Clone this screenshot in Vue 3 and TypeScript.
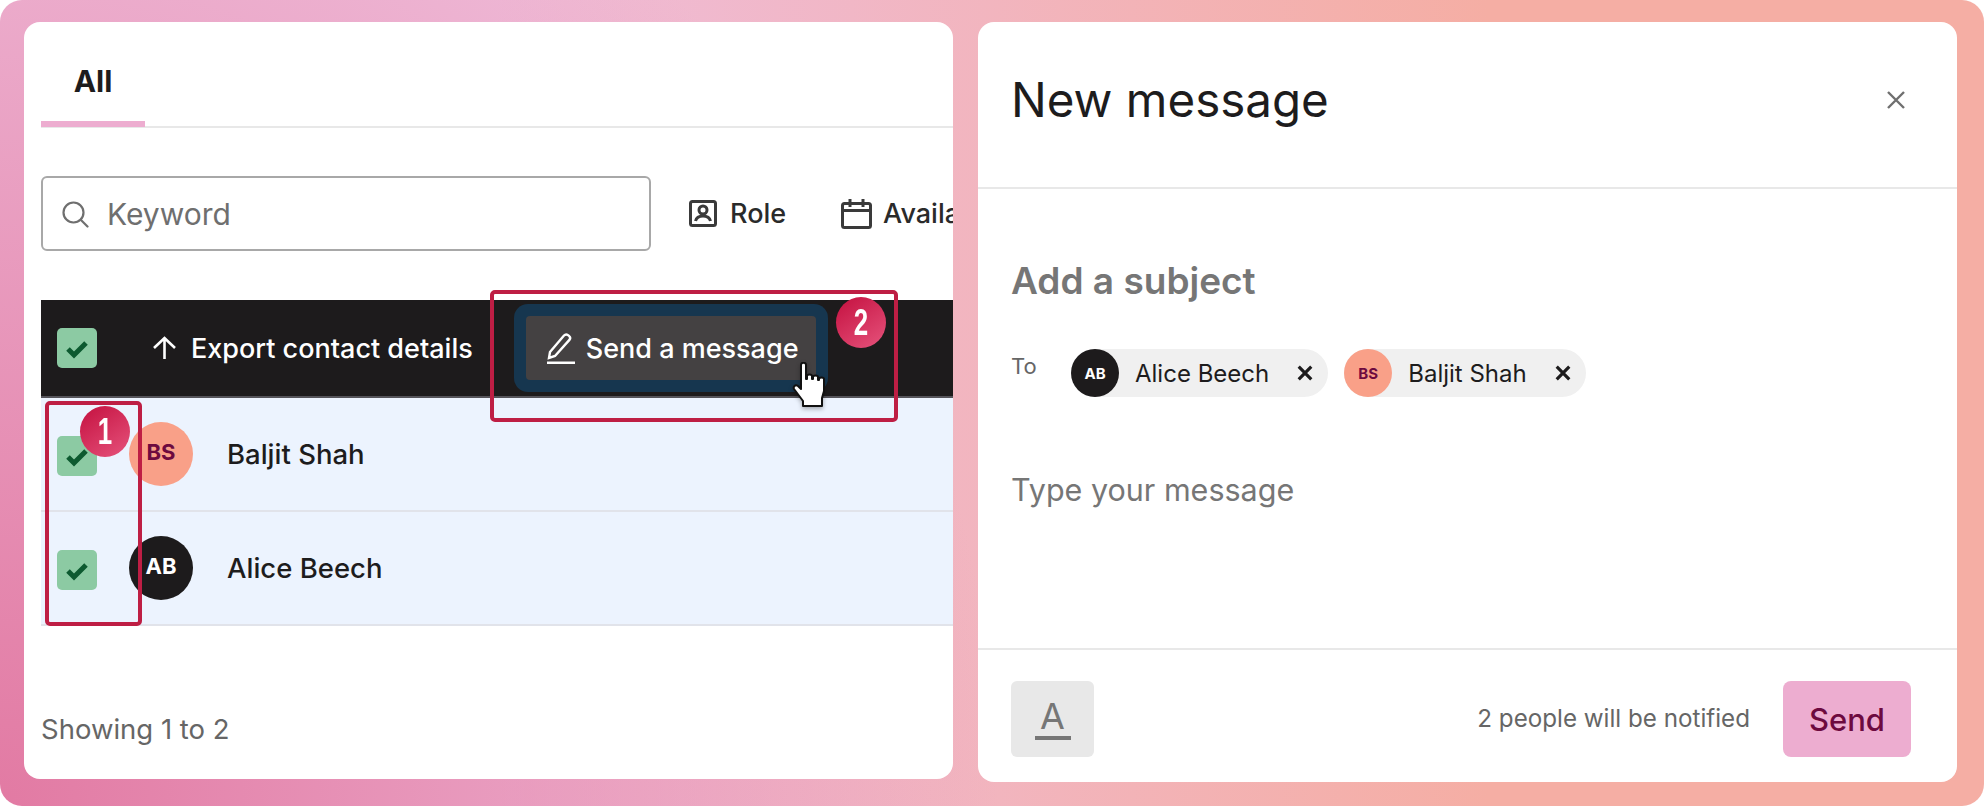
<script setup lang="ts">
interface Person { name: string; initials: string; tone: string }
const rows: Person[] = [
  { name: 'Baljit Shah', initials: 'BS', tone: 'peach' },
  { name: 'Alice Beech', initials: 'AB', tone: 'dark' },
]
const chips: Person[] = [rows[1], rows[0]]
</script>

<template>
  <div class="page">
    <section class="card left">
      <div class="tabs"><div class="tab">All</div></div>

      <div class="filters">
        <div class="search">
          <svg class="search-icon" viewBox="0 0 28 28" fill="none" stroke="#6f6f6f" stroke-width="2.2">
            <circle cx="12.5" cy="12.5" r="10" />
            <path d="M20 20l6.5 6.5" stroke-linecap="round" />
          </svg>
          <span>Keyword</span>
        </div>
        <div class="filter role">
          <svg viewBox="0 0 28 28" fill="none" stroke="#3a3a3a" stroke-width="3">
            <rect x="1.5" y="1.5" width="25" height="24" rx="2" />
            <circle cx="14" cy="10" r="4" />
            <path d="M6.5 21c1-4 4-5 7.500-5s6.500 1 7.500 5" />
          </svg>
          <span>Role</span>
        </div>
        <div class="filter avail">
          <svg viewBox="0 0 31 30" fill="none" stroke="#3a3a3a" stroke-width="3">
            <rect x="1.500" y="4.500" width="28" height="24" rx="2" />
            <path d="M1.500 11.500h28M9 0v8M22 0v8" />
          </svg>
          <span>Availability</span>
        </div>
      </div>

      <div class="bulk">
        <span class="check"><svg viewBox="0 0 40 40"><path d="M11 21l6 6 12-12" /></svg></span>
        <div class="export">
          <svg viewBox="0 0 25 24" fill="none" stroke="#fff" stroke-width="2.600">
            <path d="M12.500 23V2M2 12L12.500 2 23 12" />
          </svg>
          <span>Export contact details</span>
        </div>
        <div class="ring">
          <div class="send-msg">
            <svg viewBox="0 0 28 32" fill="none" stroke="#fff" stroke-width="2.400">
              <path d="M3 20L17 3.500c1.200-1.300 2.800-1.300 4-.4l1 .8c1.300 1 1.400 2.700.4 4L8 24l-6 2z" />
              <path d="M0 31h28" stroke-width="3" />
            </svg>
            <span>Send a message</span>
          </div>
        </div>
      </div>

      <div v-for="row in rows" :key="row.name" class="row">
        <span class="check row-check"><svg viewBox="0 0 40 40"><path d="M11 21l6 6 12-12" /></svg></span>
        <span class="avatar" :class="row.tone">{{ row.initials }}</span>
        <span class="name">{{ row.name }}</span>
      </div>

      <div class="showing">Showing 1 to 2</div>
    </section>

    <section class="card right">
      <header class="head">
        <h1>New message</h1>
        <svg class="close" viewBox="0 0 20 20" fill="none" stroke="#6f6f6f" stroke-width="2.400">
          <path d="M2 2l16 16M18 2L2 18" />
        </svg>
      </header>

      <div class="body">
        <div class="subject">Add a subject</div>
        <div class="to">
          <span class="to-label">To</span>
          <div v-for="chip in chips" :key="chip.name" class="chip">
            <span class="chip-avatar" :class="chip.tone">{{ chip.initials }}</span>
            <span class="chip-name">{{ chip.name }}</span>
            <svg viewBox="0 0 14 14" fill="none" stroke="#1d1c1d" stroke-width="2.800">
              <path d="M1.500 1.500l11 11M12.500 1.500l-11 11" />
            </svg>
          </div>
        </div>
        <div class="typed">Type your message</div>
      </div>

      <footer class="foot">
        <div class="format"><span>A</span><i></i></div>
        <span class="notified">2 people will be notified</span>
        <div class="send">Send</div>
      </footer>
    </section>

    <div class="mark mark-one"></div>
    <div class="mark mark-two"></div>
    <div class="badge badge-one"><span>1</span></div>
    <div class="badge badge-two"><span>2</span></div>

    <svg class="cursor" viewBox="0 0 36 52">
      <path
        d="M9 3c0-3 5-3 5 0v14h1v-3c0-2 5-2 5 0v3h1v-2c0-2 5-2 5 0v3h1v-1c0-2 5-2 5 0v12l-2 7v8H11v-5L2 27c-1-2 1-5 4-3l3 3z"
        fill="#fff" stroke="#111" stroke-width="2" stroke-linejoin="round"
      />
    </svg>
  </div>
</template>

<style>
html, body { margin: 0; background: #fff; }
</style>

<style scoped>
.page {
  position: relative;
  box-sizing: border-box;
  width: 1984px;
  height: 806px;
  display: flex;
  align-items: flex-start;
  gap: 25px;
  padding: 22px 0 0 24px;
  border-radius: 22px;
  overflow: hidden;
  background:
    radial-gradient(1000px 1100px at 0 100%, #e27aa3, rgba(226, 122, 163, 0)),
    linear-gradient(90deg, #efbcd9 25%, #f5aea4 75%);
  font-family: Inter, "Noto Sans", sans-serif;
  color: #1d1c1d;
}
.card {
  box-sizing: border-box;
  background: #fff;
  border-radius: 16px;
  overflow: hidden;
  flex: none;
}
.left {
  width: 929px;
  height: 757px;
  padding-left: 17px;
}
.tabs {
  box-sizing: border-box;
  height: 106px;
  border-bottom: 2px solid #e8e8e8;
  display: flex;
}
.tab {
  box-sizing: border-box;
  width: 104px;
  height: 105px;
  border-bottom: 6px solid #edadd0;
  text-align: center;
  font-size: 30px;
  font-weight: 700;
  line-height: 36px;
  padding-top: 41px;
}
.filters {
  display: flex;
  align-items: center;
  height: 75px;
  margin-top: 48px;
  white-space: nowrap;
}
.search {
  box-sizing: border-box;
  width: 610px;
  height: 75px;
  flex: none;
  display: flex;
  align-items: center;
  border: 2px solid #a8a8a8;
  border-radius: 6px;
  padding-left: 18px;
  color: #6f6f6f;
  font-size: 30px;
}
.search-icon { width: 28px; height: 28px; margin-right: 18px; }
.filter {
  display: flex;
  align-items: center;
  gap: 13px;
  font-size: 27px;
  font-weight: 500;
  color: #2a2a2a;
  flex: none;
}
.role { margin-left: 38px; }
.role svg { width: 28px; height: 28px; }
.avail { margin-left: 55px; gap: 11px; }
.avail svg { width: 31px; height: 30px; }
.bulk {
  box-sizing: border-box;
  height: 98px;
  margin-top: 49px;
  display: flex;
  align-items: center;
  padding-left: 16px;
  background: #1d1b1c;
  border-bottom: 2px solid #55545a;
}
.check {
  width: 40px;
  height: 40px;
  flex: none;
  border-radius: 5px;
  background: #8ccaa3;
}
.row-check { margin-top: 4px; }
.check svg { display: block; width: 40px; height: 40px; fill: none; stroke: #0d5a30; stroke-width: 5; }
.export {
  display: flex;
  align-items: center;
  gap: 14px;
  margin-left: 55px;
  color: #fff;
  font-size: 27px;
  font-weight: 500;
  white-space: nowrap;
}
.export svg { width: 25px; height: 24px; }
.ring {
  margin-left: 41px;
  padding: 12px;
  border-radius: 14px;
  background: #16364f;
}
.send-msg {
  box-sizing: border-box;
  width: 290px;
  height: 64px;
  display: flex;
  align-items: center;
  gap: 11px;
  padding-left: 21px;
  border-radius: 4px;
  background: #444142;
  color: #fff;
  font-size: 27px;
  font-weight: 500;
  white-space: nowrap;
}
.send-msg svg { width: 28px; height: 32px; }
.row {
  box-sizing: border-box;
  height: 114px;
  display: flex;
  align-items: center;
  padding-left: 16px;
  background: #ecf3fe;
  border-bottom: 2px solid #e1e3ea;
}
.avatar {
  width: 64px;
  height: 64px;
  margin-left: 32px;
  flex: none;
  border-radius: 50%;
  display: flex;
  align-items: center;
  justify-content: center;
  font-size: 22px;
  font-weight: 700;
  padding-bottom: 4px;
  box-sizing: border-box;
}
.peach { background: #f9a088; color: #6d0a3f; }
.dark { background: #1d1b1c; color: #fff; }
.name {
  margin-left: 35px;
  font-size: 27.500px;
  font-weight: 500;
  position: relative;
  left: -1px;
}
.showing {
  margin-top: 85px;
  color: #666;
  font-size: 27.500px;
  line-height: 36px;
}
.right {
  width: 979px;
  height: 760px;
  display: flex;
  flex-direction: column;
}
.head {
  box-sizing: border-box;
  height: 167px;
  flex: none;
  display: flex;
  align-items: center;
  justify-content: space-between;
  padding: 0 51px 9px 33px;
  border-bottom: 2px solid #e8e8e8;
}
h1 {
  margin: 0;
  font-size: 47.500px;
  font-weight: 400;
  line-height: 56px;
}
.close { width: 20px; height: 20px; }
.body {
  flex: 1;
  padding: 0 33px;
}
.subject {
  margin-top: 70px;
  color: #767676;
  font-size: 37px;
  font-weight: 600;
  line-height: 44px;
}
.to {
  margin-top: 46px;
  display: flex;
  align-items: flex-start;
  height: 48px;
}
.to-label {
  width: 60px;
  color: #666;
  font-size: 22px;
  line-height: 34px;
}
.chip {
  display: flex;
  align-items: center;
  height: 48px;
  margin-right: 16px;
  border-radius: 24px;
  background: #f0f0f0;
  padding-right: 15px;
  font-size: 24px;
  white-space: nowrap;
}
.chip svg { width: 16px; height: 16px; margin-left: 28px; }
.chip-avatar {
  width: 48px;
  height: 48px;
  border-radius: 50%;
  display: flex;
  align-items: center;
  justify-content: center;
  font-size: 15px;
  font-weight: 700;
}
.chip-name { margin-left: 16px; }
.typed {
  margin-top: 75px;
  color: #767676;
  font-size: 30.500px;
  line-height: 36px;
}
.foot {
  box-sizing: border-box;
  height: 134px;
  flex: none;
  display: flex;
  align-items: center;
  padding: 31px 46px 25px 33px;
  border-top: 2px solid #e8e8e8;
}
.format {
  box-sizing: border-box;
  width: 83px;
  height: 76px;
  border-radius: 6px;
  background: #e8e8e8;
  color: #767676;
  display: flex;
  flex-direction: column;
  align-items: center;
  justify-content: center;
  font-size: 36px;
  line-height: 36px;
}
.format i { width: 36px; height: 4px; background: #767676; margin-top: 2px; }
.notified {
  margin-left: auto;
  margin-right: 33px;
  color: #666;
  font-size: 24.200px;
  position: relative;
  top: -1px;
}
.send {
  width: 128px;
  height: 76px;
  border-radius: 8px;
  background: #edadd0;
  color: #6d0a3f;
  display: flex;
  align-items: center;
  justify-content: center;
  font-size: 31px;
  font-weight: 500;
}
.mark {
  position: absolute;
  box-sizing: border-box;
  border: 4px solid #be1e44;
  border-radius: 5px;
}
.mark-one { left: 45px; top: 401px; width: 97px; height: 225px; }
.mark-two { left: 490px; top: 290px; width: 408px; height: 132px; }
.badge {
  position: absolute;
  width: 50px;
  height: 51px;
  border-radius: 50%;
  display: flex;
  align-items: center;
  justify-content: center;
  background: linear-gradient(145deg, #c4103f, #e6537c);
  color: #fff;
  font-family: "Liberation Sans", sans-serif;
  font-size: 36px;
  font-weight: 700;
}
.badge span { display: block; transform: scaleX(0.72); }
.badge-one { left: 80px; top: 406px; }
.badge-two { left: 836px; top: 297px; }
.cursor {
  position: absolute;
  left: 792px;
  top: 362px;
  width: 36px;
  height: 52px;
  filter: drop-shadow(0 2px 2px rgba(0, 0, 0, 0.3));
}
</style>
